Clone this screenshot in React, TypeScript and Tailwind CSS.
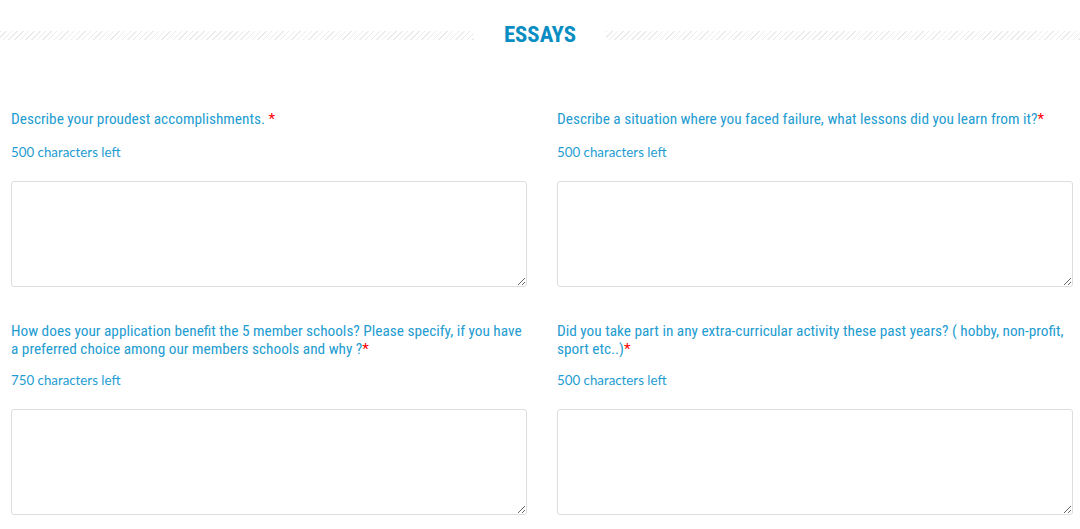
const questions = [
  {
    label: "Describe your proudest accomplishments. ",
    left: "500 characters left",
    gap: "mt-[15px]",
  },
  {
    label: "Describe a situation where you faced failure, what lessons did you learn from it?",
    left: "500 characters left",
    gap: "mt-[15px]",
  },
  {
    label:
      "How does your application benefit the 5 member schools? Please specify, if you have a preferred choice among our members schools and why ?",
    left: "750 characters left",
    gap: "mt-[13px]",
  },
  {
    label:
      "Did you take part in any extra-curricular activity these past years? ( hobby, non-profit, sport etc..)",
    left: "500 characters left",
    gap: "mt-[13px]",
  },
];

function Hatch() {
  return (
    <div className="h-[9px] flex-1 bg-[repeating-linear-gradient(135deg,#ebebeb_0px,#ebebeb_1px,transparent_1px,transparent_4px)]" />
  );
}

export default function App() {
  return (
    <div className="min-h-[529px] bg-white font-['Roboto_Condensed','Roboto',sans-serif]">
      <div className="flex items-center pt-[22px]">
        <Hatch />
        <h2 className="px-[30px] text-[22.8px] font-bold uppercase leading-[26px] text-[#0a8dc2] [font-stretch:condensed]">
          Essays
        </h2>
        <Hatch />
      </div>

      <div className="mt-[62px] grid grid-cols-2 gap-x-[30px] gap-y-[35px] pl-[11px] pr-[7px]">
        {questions.map((q) => (
          <div key={q.label}>
            <label className="block text-[15.3px] leading-[18px] text-[#239cd1] [font-stretch:condensed]">
              {q.label}
              <span className="text-[#ff0000]">*</span>
            </label>
            <p className={`${q.gap} font-['Lato',sans-serif] text-[13.3px] leading-[18px] text-[#239cd1]`}>
              {q.left}
            </p>
            <textarea className="mt-[20px] block h-[106px] w-full rounded-[3px] border border-[#dedede] bg-white" />
          </div>
        ))}
      </div>
    </div>
  );
}
